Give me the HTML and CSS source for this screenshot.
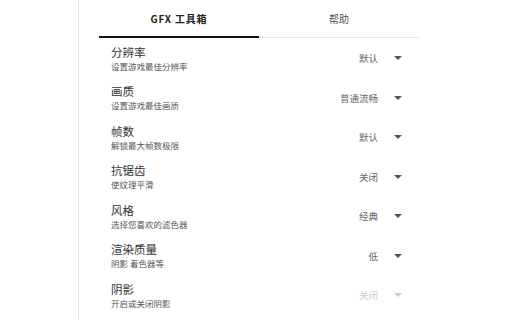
FILE: index.html
```html
<!DOCTYPE html>
<html lang="zh">
<head>
  <meta charset="UTF-8" />
  <title>GFX 工具箱</title>
  <link rel="stylesheet" href="styles.css">
</head>
<body>
  <div class="side"></div>
  <div class="panel">
    <div class="tabs">
      <div class="tab active">GFX 工具箱</div>
      <div class="tab">帮助</div>
    </div>

    <div class="row">
      <div class="info">
        <div class="title">分辨率</div>
        <div class="sub">设置游戏最佳分辨率</div>
      </div>
      <div class="value">默认</div>
      <div class="arrow"></div>
    </div>
    <div class="row">
      <div class="info">
        <div class="title">画质</div>
        <div class="sub">设置游戏最佳画质</div>
      </div>
      <div class="value">普通流畅</div>
      <div class="arrow"></div>
    </div>
    <div class="row">
      <div class="info">
        <div class="title">帧数</div>
        <div class="sub">解锁最大帧数极限</div>
      </div>
      <div class="value">默认</div>
      <div class="arrow"></div>
    </div>
    <div class="row">
      <div class="info">
        <div class="title">抗锯齿</div>
        <div class="sub">使纹理平滑</div>
      </div>
      <div class="value">关闭</div>
      <div class="arrow"></div>
    </div>
    <div class="row">
      <div class="info">
        <div class="title">风格</div>
        <div class="sub">选择您喜欢的滤色器</div>
      </div>
      <div class="value">经典</div>
      <div class="arrow"></div>
    </div>
    <div class="row">
      <div class="info">
        <div class="title">渲染质量</div>
        <div class="sub">阴影 着色器等</div>
      </div>
      <div class="value">低</div>
      <div class="arrow"></div>
    </div>
    <div class="row disabled">
      <div class="info">
        <div class="title">阴影</div>
        <div class="sub">开启或关闭阴影</div>
      </div>
      <div class="value">关闭</div>
      <div class="arrow"></div>
    </div>
  </div>
</body>
</html>
```

FILE: styles.css
```css
* { margin: 0; padding: 0; box-sizing: border-box; }

html, body { height: 100%; }

body {
  font-family: "Noto Sans CJK SC", "Noto Sans", sans-serif;
  background: #fff;
  color: #333;
  display: flex;
  overflow: hidden;
}

.side {
  width: 79px;
  flex: none;
  border-right: 1px solid #fbe2cc;
}

.panel {
  width: 320px;
  margin-left: 20px;
}

.tabs {
  display: flex;
  height: 38px;
  border-bottom: 1px solid #e6e6e6;
}

.tab {
  flex: 1;
  text-align: center;
  font-size: 10px;
  line-height: 37px;
  color: #555;
}

.tab.active {
  color: #222;
  font-weight: bold;
  letter-spacing: 0.08em;
  border-bottom: 2px solid #111;
  margin-bottom: -1px;
}

.row {
  display: flex;
  align-items: center;
  height: 39.5px;
  padding: 1px 17px 0 12px;
}

.info { flex: 1; }

.title {
  font-size: 11.5px;
  line-height: 15px;
  color: #333;
}

.sub {
  font-size: 8.5px;
  line-height: 12px;
  color: #555;
}

.value {
  font-size: 9.5px;
  color: #666;
  margin-right: 16px;
}

.arrow {
  width: 0;
  height: 0;
  border-left: 4px solid transparent;
  border-right: 4px solid transparent;
  border-top: 4px solid #555;
}

.disabled .value { color: #ccc; }
.disabled .arrow { border-top-color: #ccc; }
```
